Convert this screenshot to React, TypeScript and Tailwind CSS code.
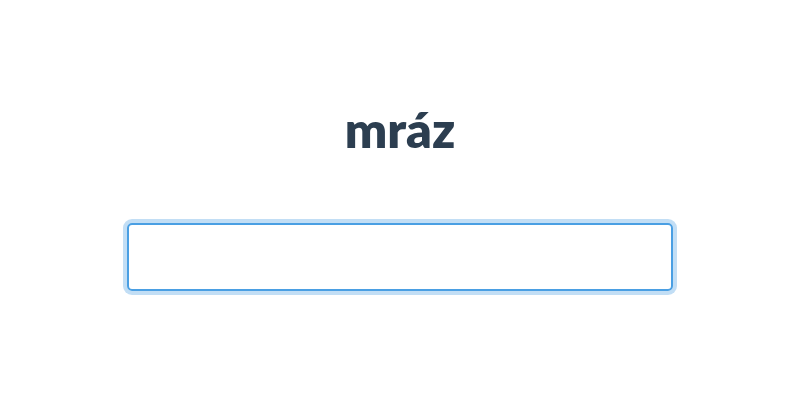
import React from 'react';

const App: React.FC = () => {
    return (
        <div className="w-[800px] h-[400px] bg-white flex flex-col items-center" style={{ fontFamily: 'Lato, "Open Sans", sans-serif' }}>
            <h1 className="mt-[99px] text-[50px] leading-[60px] font-extrabold text-[#2c3e50]">mráz</h1>
            <input
                type="text"
                autoFocus
                className="mt-[64px] w-[546px] h-[68px] rounded-[5px] border-2 border-[#4a9fe3] outline-none ring-4 ring-[#c2def5] px-3 text-2xl text-[#2c3e50]"
            />
        </div>
    );
};

export default App;
